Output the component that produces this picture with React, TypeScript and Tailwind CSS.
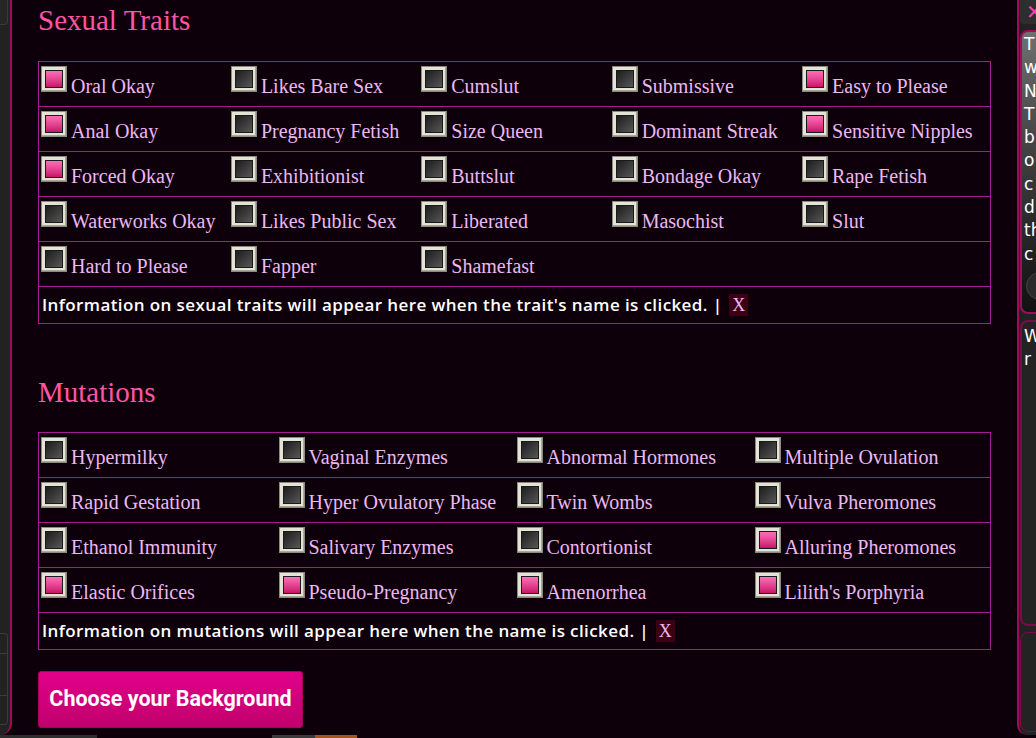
import React from "react";

const traits = [
  ["Oral Okay", true], ["Likes Bare Sex", false], ["Cumslut", false], ["Submissive", false], ["Easy to Please", true],
  ["Anal Okay", true], ["Pregnancy Fetish", false], ["Size Queen", false], ["Dominant Streak", false], ["Sensitive Nipples", true],
  ["Forced Okay", true], ["Exhibitionist", false], ["Buttslut", false], ["Bondage Okay", false], ["Rape Fetish", false],
  ["Waterworks Okay", false], ["Likes Public Sex", false], ["Liberated", false], ["Masochist", false], ["Slut", false],
  ["Hard to Please", false], ["Fapper", false], ["Shamefast", false],
] as [string, boolean][];

const mutations = [
  ["Hypermilky", false], ["Vaginal Enzymes", false], ["Abnormal Hormones", false], ["Multiple Ovulation", false],
  ["Rapid Gestation", false], ["Hyper Ovulatory Phase", false], ["Twin Wombs", false], ["Vulva Pheromones", false],
  ["Ethanol Immunity", false], ["Salivary Enzymes", false], ["Contortionist", false], ["Alluring Pheromones", true],
  ["Elastic Orifices", true], ["Pseudo-Pregnancy", true], ["Amenorrhea", true], ["Lilith's Porphyria", true],
] as [string, boolean][];

const chunk = <T,>(arr: T[], n: number) => {
  const out: T[][] = [];
  for (let i = 0; i < arr.length; i += n) out.push(arr.slice(i, i + n));
  return out;
};

const Box = ({ on }: { on: boolean }) => (
  <span className="mt-[4px] ml-[2px] inline-block w-[26px] h-[26px] shrink-0 border border-[#8a8a80] bg-[#e4e4d6] p-[3px] shadow-[inset_-1px_-1px_0_#a8a898]">
    <span
      className={
        on
          ? "block w-full h-full border border-[#1a1a1a] bg-gradient-to-b from-[#ff6cb8] to-[#c8106c]"
          : "block w-full h-full border border-[#1a1a1a] bg-gradient-to-br from-[#1e1e1e] to-[#575757]"
      }
    />
  </span>
);

// rows only get horizontal rules, the outer frame comes from the table
const Grid = ({ items, cols, info }: { items: [string, boolean][]; cols: number; info: string }) => (
  <table className="w-full border-collapse table-fixed border border-[#a51b96]">
    <tbody>
      {chunk(items, cols).map((row, r) => (
        <tr key={r}>
          {Array.from({ length: cols }).map((_, c) => {
            const it = row[c];
            return (
              <td key={c} className="border-y border-[#a51b96] h-[45px] p-0 align-top">
                {it && (
                  <div className="flex items-start">
                    <Box on={it[1]} />
                    <span className="ml-[4px] mt-[12px] text-[20px] leading-[25px] text-[#ecb8f4] whitespace-nowrap font-['Liberation_Serif',serif]">
                      {it[0]}
                    </span>
                  </div>
                )}
              </td>
            );
          })}
        </tr>
      ))}
      <tr>
        <td colSpan={cols} className="border-y border-[#a51b96] h-[37px] px-[3px] align-middle">
          <span className="text-[17px] tracking-[0.4px] font-semibold text-white font-['Open_Sans',sans-serif]">{info} | </span>
          <span className="inline-block ml-[2px] px-[3px] bg-[#3d0012] text-[18px] leading-[22px] text-[#ecb8f4] font-['Liberation_Serif',serif]">
            X
          </span>
        </td>
      </tr>
    </tbody>
  </table>
);

const Heading = ({ children }: { children: React.ReactNode }) => (
  <h2 className="text-[29px] leading-[40px] text-[#ff55a4] font-['Liberation_Serif',serif]">{children}</h2>
);

const sideLines = ["T", "w", "N", "T", "b", "o", "c", "d", "th", "c"];

export default function App() {
  return (
    <div className="w-[1036px] h-[738px] overflow-hidden bg-[#0e000a] flex flex-col">
      <div className="flex h-[735px]">
        {/* left drawer edge */}
        <div className="w-[12px] shrink-0 h-full bg-[#222] border-r-2 border-[#9c0d5c] rounded-br-[12px] flex flex-col justify-between pb-[10px]">
          <div className="h-[25px] w-[8px] border-r border-b border-[#3a3a3a] rounded-br-[4px] bg-[#262626]" />
          <div className="h-[92px] w-[8px] border-r border-y border-[#3c3c3c] rounded-r-[4px] flex flex-col">
            <div className="h-[20px] border-b border-[#3c3c3c]" />
            <div className="h-[42px] border-b border-[#3c3c3c]" />
          </div>
        </div>

        {/* main */}
        <div className="flex-1 px-[26px]">
          <Heading>Sexual Traits</Heading>
          <div className="mt-[21px]">
            <Grid items={traits} cols={5} info="Information on sexual traits will appear here when the trait's name is clicked." />
          </div>
          <div className="mt-[48px]">
            <Heading>Mutations</Heading>
          </div>
          <div className="mt-[20px]">
            <Grid items={mutations} cols={4} info="Information on mutations will appear here when the name is clicked." />
          </div>
          <button className="mt-[21px] w-[265px] h-[57px] rounded-[3px] border border-[#a8005e] bg-gradient-to-b from-[#e2008a] to-[#c0006c] text-white text-[21.5px] font-bold font-['Roboto',sans-serif]">
            Choose your Background
          </button>
        </div>

        {/* right drawer edge */}
        <div className="w-[19px] shrink-0 h-full bg-[#222] border-l-2 border-[#9c0d5c] rounded-bl-[10px] pl-[1px] flex flex-col gap-[6px] overflow-hidden">
          <div className="h-[24px] bg-[#2e2e2e] rounded-bl-[4px] flex items-center pl-[6px] text-[#ff3fb0] text-[20px] leading-none font-bold font-['DejaVu_Sans',sans-serif]">
            ✕
          </div>
          <div className="h-[284px] w-[40px] rounded-[8px] border-2 border-[#9c0d5c] bg-gradient-to-b from-[#707070] via-[#3a3a3a] to-[#111] pl-[2px] pt-[1px] overflow-hidden">
            {sideLines.map((l, i) => (
              <div key={i} className="text-[17px] leading-[23.3px] text-white whitespace-nowrap font-['DejaVu_Sans',sans-serif]">
                {l}
              </div>
            ))}
            <div className="mt-[6px] ml-[2px] w-[28px] h-[28px] rounded-full bg-[#2a2a2a] border border-[#444]" />
          </div>
          <div className="h-[306px] w-[40px] rounded-[8px] border-2 border-[#7a0c4a] bg-[#232323] pl-[2px] pt-[3px] overflow-hidden">
            <div className="text-[17px] leading-[23px] text-white font-['DejaVu_Sans',sans-serif]">W</div>
            <div className="text-[17px] leading-[23px] text-white font-['DejaVu_Sans',sans-serif]">r</div>
          </div>
          <div className="h-[100px] w-[40px] rounded-[8px] border border-[#7a0c4a] bg-[#232323]" />
        </div>
      </div>

      {/* strip of the next bar peeking in */}
      <div className="h-[3px] flex">
        <div className="w-[97px] bg-[#2e2e2e]" />
        <div className="w-[175px]" />
        <div className="w-[43px] bg-[#3a3a3a]" />
        <div className="w-[42px] bg-[#a3541c]" />
      </div>
    </div>
  );
}
